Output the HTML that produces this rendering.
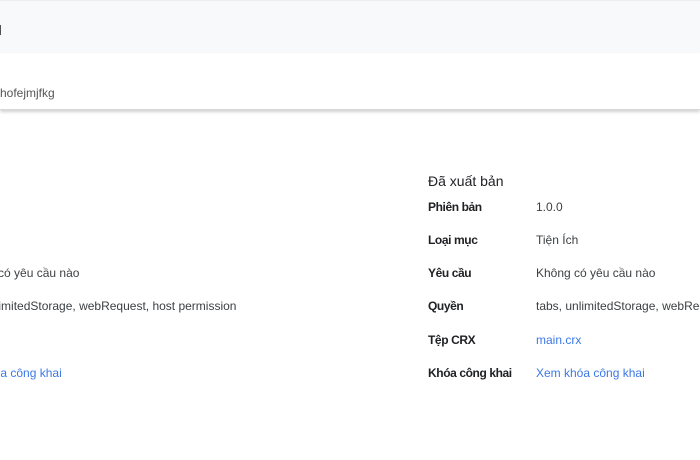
<!DOCTYPE html>
<html><head><meta charset="utf-8"><style>
html,body{margin:0;width:700px;height:460px;overflow:hidden}
body{background:#fff;font-family:"Liberation Sans",Arial,sans-serif;position:relative}
.top{position:absolute;left:0;top:0;width:700px;height:53px;background:#f8f9fa;border-top:1px solid #eceef0;box-sizing:border-box}
.bar{position:absolute;left:0;top:53px;width:700px;height:56px;background:#fff;box-shadow:0 2px 3px rgba(0,0,0,.18);border-bottom:1px solid #d8d8d8}
.t{position:absolute;white-space:nowrap;font-size:12px;color:#3c4043;line-height:14px}
.l{font-weight:bold;color:#202124;letter-spacing:-0.4px}
.a{color:#3b78e7}
.clip{position:absolute;left:0;top:0;width:700px;height:460px;overflow:hidden}
</style></head><body><div class="clip">
<div class="top"><div class="t" style="left:-6px;top:22px;font-size:14px;color:#333">d</div></div>
<div class="bar"><div class="t" style="left:0;top:33px;color:#555">hofejmjfkg</div></div>
<div class="t" style="left:428px;top:174px;font-size:14px;color:#202124">Đã xuất bản</div>
<div class="t l" style="left:428px;top:200px">Phiên bản</div><div class="t" style="left:536px;top:200px">1.0.0</div>
<div class="t l" style="left:428px;top:233px">Loại mục</div><div class="t" style="left:536px;top:233px">Tiện Ích</div>
<div class="t l" style="left:428px;top:266px">Yêu cầu</div><div class="t" style="left:536px;top:266px">Không có yêu cầu nào</div>
<div class="t l" style="left:428px;top:299px">Quyền</div><div class="t" style="left:536px;top:299px">tabs, unlimitedStorage, webRequest, host permission</div>
<div class="t l" style="left:428px;top:333px">Tệp CRX</div><div class="t a" style="left:536px;top:333px">main.crx</div>
<div class="t l" style="left:428px;top:366px">Khóa công khai</div><div class="t a" style="left:536px;top:366px">Xem khóa công khai</div>
<div class="t" style="left:-40px;top:266px">Không có yêu cầu nào</div>
<div class="t" style="left:-47px;top:299px">tabs, unlimitedStorage, webRequest, host permission</div>
<div class="t a" style="left:-47px;top:366px">Xem khóa công khai</div>
</div></body></html>
